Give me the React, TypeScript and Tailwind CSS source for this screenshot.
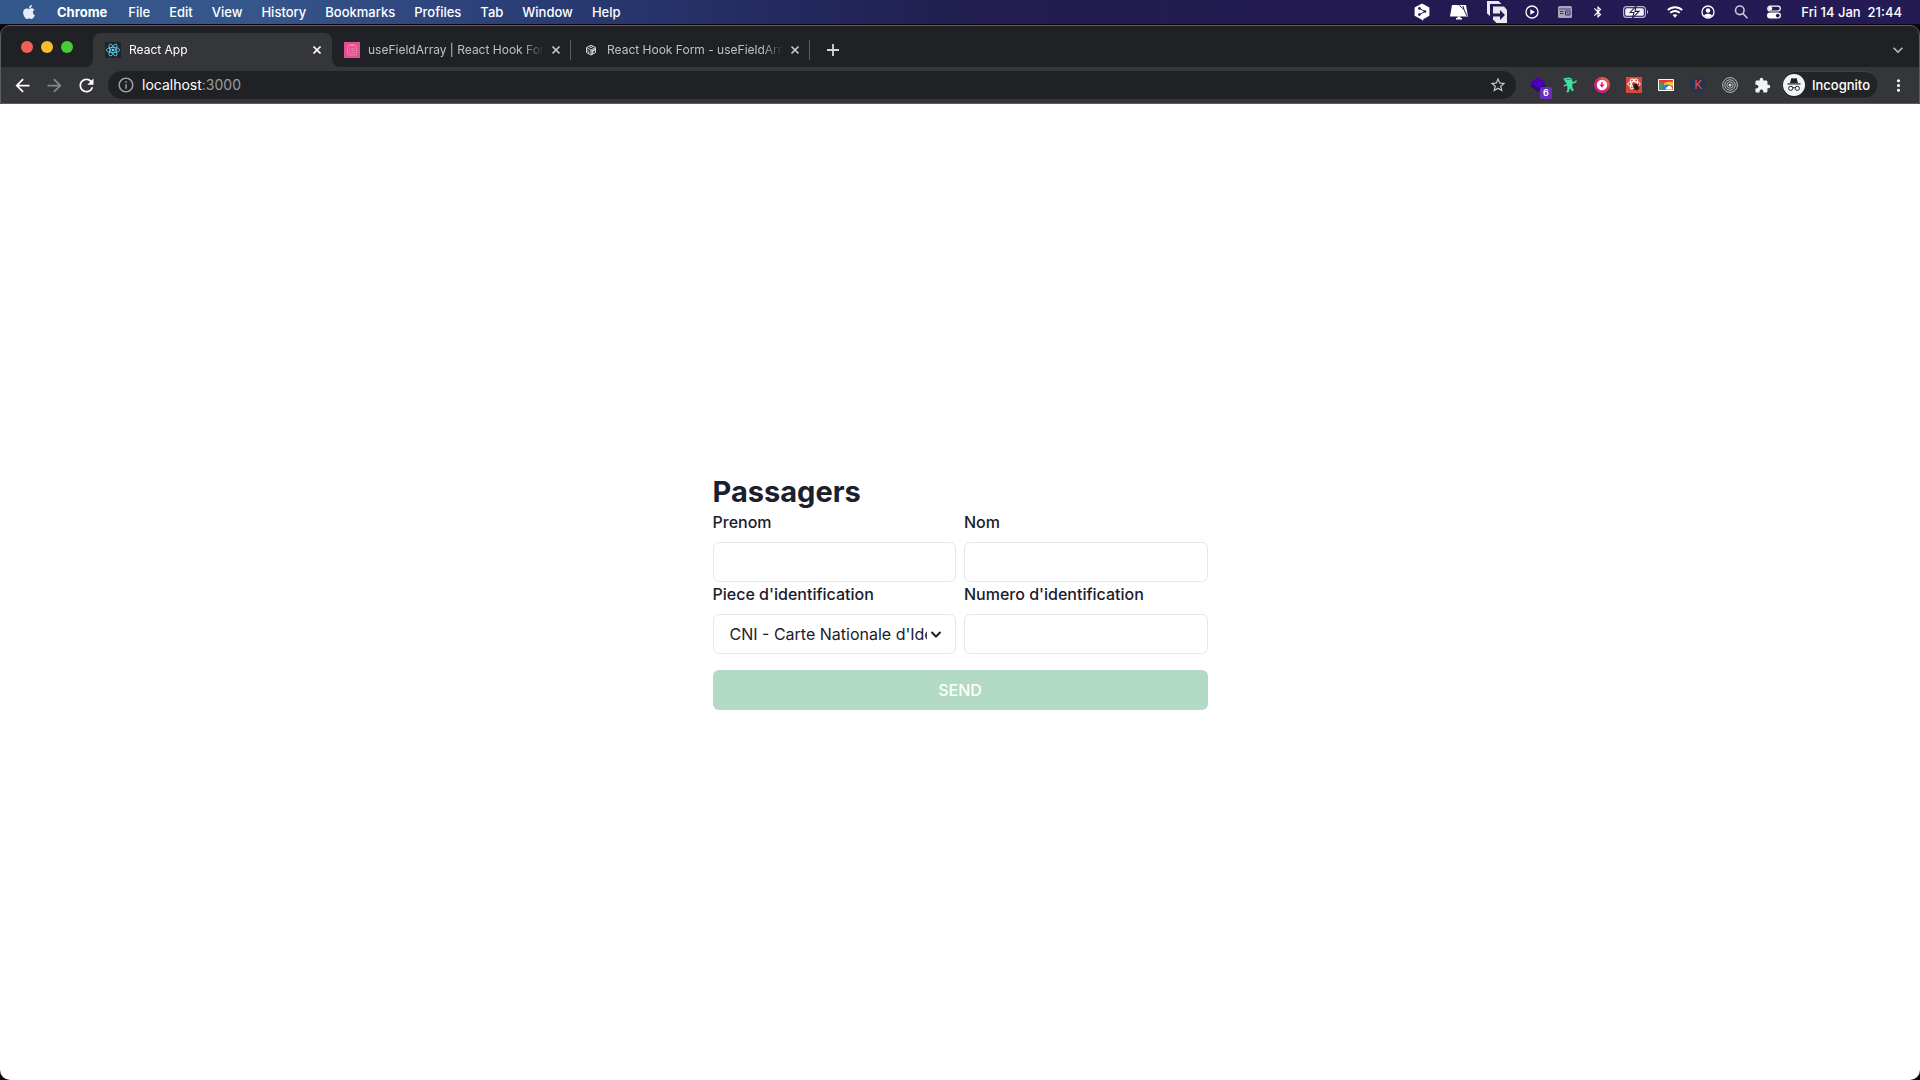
import React, { useState } from 'react';
import { FaApple } from 'react-icons/fa';
import {
  MdArrowBack,
  MdArrowForward,
  MdBluetooth,
  MdExtension,
  MdInfoOutline,
  MdMoreVert,
  MdRefresh,
  MdStarBorder,
} from 'react-icons/md';

const MENUS = ['File', 'Edit', 'View', 'History', 'Bookmarks', 'Profiles', 'Tab', 'Window', 'Help'];

/* ---------- status bar icons ---------- */

const HexIcon = () => (
  <svg className="w-[18px] h-[18px]" viewBox="0 0 18 18">
    <path d="M9 .5 16.400 4.500v8.200L11 15.800 9 18V16.800L1.600 12.700V4.500Z" fill="#fff" />
    <path d="M6.400 5.400 12 8.500 6.400 11.600" fill="none" stroke="#241b52" strokeWidth="1" />
    <circle cx="6.400" cy="5.400" r="1.300" fill="#241b52" />
    <circle cx="12" cy="8.500" r="1.300" fill="#241b52" />
    <circle cx="6.400" cy="11.600" r="1.300" fill="#241b52" />
  </svg>
);

const MonitorIcon = () => (
  <svg className="w-5 h-[18px]" viewBox="0 0 20 18">
    <path d="M3 2h14l2 11.500H1Z" fill="#fff" />
    <path d="M10.500 2.500 15 6.500l3 6.500M14 3l1 3.500" fill="none" stroke="#241b52" strokeWidth="1" />
    <path d="M8.500 13.500h3V15H13v1.600H7V15h1.500Z" fill="#fff" />
  </svg>
);

const ShareIcon = () => (
  <svg className="w-5 h-[22px]" viewBox="0 0 20 22">
    <path d="M0 0h11.500l3 3H3v12L0 12.500Z" fill="#e9e8ee" />
    <path d="M6 5.500h11L20 9v13H9.500L6 18.500Z" fill="#e9e8ee" />
    <path d="M6 12.500h7V9l5 5-5 5v-3.500H6Z" fill="#241b52" />
  </svg>
);

const PlayCircleIcon = () => (
  <svg className="w-3.5 h-3.5" viewBox="0 0 14 14">
    <circle cx="7" cy="7" r="6" fill="none" stroke="#fff" strokeWidth="1.300" />
    <path d="M5.300 4.200 10 7l-4.700 2.800Z" fill="#fff" />
  </svg>
);

const PanelIcon = () => (
  <svg className="w-4 h-3.5" viewBox="0 0 16 14">
    <rect x="1" y="1" width="14" height="12" rx="1.500" fill="#a9a5bf" />
    <path d="M2 4h12" stroke="#4b4475" />
    <path d="M3 6.500h3.500M3 8.500h3.500M8.500 6h4.500v4H8.500ZM9.500 7l2 2" fill="none" stroke="#352c66" />
  </svg>
);

const BatteryIcon = () => (
  <svg className="w-[26px] h-3" viewBox="0 0 26 12">
    <rect x=".6" y=".6" width="21.800" height="10.800" rx="3" fill="none" stroke="#bdb9cf" strokeWidth="1.100" />
    <rect x="2.200" y="2.200" width="18.600" height="7.600" rx="1.600" fill="#f1f0f5" />
    <path d="M13 .2 7.200 6.500h3.800L9.600 11.800 16 5.400h-4Z" fill="#fff" stroke="#241b52" strokeWidth="1.100" />
    <path d="M24 4c1.600.8 1.600 3.200 0 4Z" fill="#bdb9cf" />
  </svg>
);

const WifiIcon = () => (
  <svg className="w-4 h-3" viewBox="0 0 16 12" fill="none" stroke="#fff" strokeWidth="1.900">
    <path d="M.8 4.200c4-4 10.400-4 14.400 0" />
    <path d="M3.300 6.900c2.700-2.500 6.700-2.500 9.400 0" />
    <path d="M5.600 9.100c1.400-1.200 3.400-1.200 4.800 0L8 11.700Z" fill="#fff" stroke="none" />
  </svg>
);

const UserIcon = () => (
  <svg className="w-3.5 h-3.5" viewBox="0 0 14 14">
    <circle cx="7" cy="7" r="6" fill="none" stroke="#fff" strokeWidth="1.300" />
    <circle cx="7" cy="5.500" r="2.200" fill="#fff" />
    <path d="M2.900 10.600c1.800-2.600 6.400-2.600 8.200 0C9 13 5 13 2.900 10.600Z" fill="#fff" />
  </svg>
);

const SearchIcon = () => (
  <svg className="w-4 h-4" viewBox="0 0 16 16" fill="none" stroke="#c9c6d8" strokeWidth="1.600">
    <circle cx="6.800" cy="6.300" r="4.300" />
    <path d="m10 9.600 4 4.200" strokeLinecap="round" />
  </svg>
);

const ControlIcon = () => (
  <svg className="w-3.5 h-3.5" viewBox="0 0 14 14">
    <rect x=".7" y="1.200" width="12.600" height="4.800" rx="2.400" fill="none" stroke="#fff" strokeWidth="1.200" />
    <circle cx="3.200" cy="3.600" r="2" fill="#fff" />
    <rect x="0" y="7.600" width="14" height="6" rx="3" fill="#fff" />
    <circle cx="10.800" cy="10.600" r="1.900" fill="#241b52" />
  </svg>
);

/* ---------- tab icons ---------- */

const ReactLogo = () => (
  <svg className="w-4 h-4 shrink-0" viewBox="0 0 16 16">
    <rect width="16" height="16" rx="1" fill="#20232a" />
    <g fill="none" stroke="#61dafb" strokeWidth=".8">
      <ellipse cx="8" cy="8" rx="6.600" ry="2.600" />
      <ellipse cx="8" cy="8" rx="6.600" ry="2.600" transform="rotate(60 8 8)" />
      <ellipse cx="8" cy="8" rx="6.600" ry="2.600" transform="rotate(120 8 8)" />
    </g>
    <circle cx="8" cy="8" r="1.300" fill="#61dafb" />
  </svg>
);

const HookFormLogo = () => (
  <svg className="w-4 h-4 shrink-0" viewBox="0 0 16 16">
    <rect width="16" height="16" fill="#e3508f" />
    <g fill="none" stroke="#f28fb8" strokeWidth=".8">
      <rect x="3.500" y="3.500" width="9" height="9.500" rx="1.500" />
      <path d="M6.200 3.500V2.600h3.600v.9M5.200 6.300h1M7.200 6.300h3.600M5.200 8.500h1M7.200 8.500h3.600M5.200 10.700h1M7.200 10.700h3.600" />
    </g>
  </svg>
);

const SandboxLogo = () => (
  <svg className="w-4 h-4 shrink-0" viewBox="0 0 16 16" fill="none" stroke="#d0d1d3" strokeWidth="1">
    <path d="M8 3.200 12.500 5.600v5L8 13l-4.500-2.400v-5Z" />
    <path d="M3.500 5.600 8 8l4.500-2.400M8 8v5M5.700 4.400 8 5.600l2.300-1.200M3.500 8.200l2.300 1.100v2.400" />
    <path d="m8.500 8.500 4-2.200v1.900l-2.200 1.100v2.300L8.500 12.500Z" fill="#d0d1d3" stroke="none" />
  </svg>
);

/* ---------- extension icons ---------- */

const LayersIcon = () => (
  <svg className="w-4 h-4" viewBox="0 0 16 16">
    <path d="M0 8.500 8 3.500l8 5L8 15Z" fill="#2c0a7a" />
    <path d="M0 5.800 8 0l8 5.800-8 5.800Z" fill="#4b00b5" />
  </svg>
);

const GremlinIcon = () => (
  <svg className="w-4 h-4" viewBox="0 0 16 16" fill="#41e0a0">
    <path d="M1 1.400 4 .9C5.500 0 9 .2 10 2l.5 2.800 2.700-.4.6-1.300.6.4.4-.4-.2 1.700-1.200 1.200-2.600.4-.6 1.200.4 3.600 1.200 1.400-.8 1.400H9.500l-.6-2.200-1.300.2-.4 2-.8 1.200H4.500l-.2-1 1-.8.1-3.800-.7-1.200L2.600 9.600l-1-.4.3-1.200L3.600 7.800l1.300-1.600L3.200 5 2 2.400Z" />
    <path d="M4.500 2.500h4.300" stroke="#1c7a5b" strokeWidth=".8" />
  </svg>
);

const DownloadIcon = () => (
  <svg className="w-4 h-4" viewBox="0 0 16 16">
    <defs>
      <linearGradient id="ring" x1="0" y1="1" x2="1" y2="0">
        <stop offset="0" stopColor="#b01fa0" />
        <stop offset=".5" stopColor="#e0206a" />
        <stop offset="1" stopColor="#f08a24" />
      </linearGradient>
    </defs>
    <circle cx="8" cy="8" r="8" fill="url(#ring)" />
    <circle cx="8" cy="8" r="5.200" fill="#fff" />
    <path d="M7.300 5h1.400v2.600h2L8 10.800 5.300 7.600h2Z" fill="#e0206a" />
  </svg>
);

const BugIcon = () => (
  <svg className="w-4 h-4" viewBox="0 0 16 16">
    <rect width="16" height="16" fill="#d9483b" />
    <g fill="none" stroke="#fff" strokeWidth="1">
      <ellipse cx="8" cy="7" rx="6.200" ry="2.500" />
      <ellipse cx="8" cy="7" rx="5.600" ry="2.500" transform="rotate(60 8 7)" />
      <ellipse cx="8" cy="7" rx="5.600" ry="2.500" transform="rotate(120 8 7)" />
    </g>
    <ellipse cx="10" cy="10" rx="2.400" ry="3.300" fill="#2b1512" transform="rotate(-35 10 10)" />
    <path d="m7 9.500 6-2M7 12.500l6.500-1.500M10 6l1 8" stroke="#2b1512" strokeWidth=".8" />
  </svg>
);

const RainbowIcon = () => (
  <svg className="w-4 h-4" viewBox="0 0 16 16">
    <rect x="0" y="2" width="16" height="12" rx="1" fill="#fff" />
    <rect x="1" y="3" width="14" height="10" fill="#e53935" />
    <path d="M15 4.500v5L9 7.500Z" fill="#fbc02d" />
    <path d="M1 13V5l5 1.500L4 13Z" fill="#43a047" />
    <path d="M6 6.500c2-2 5-2.200 9-1.500v3H6Z" fill="#fbc02d" />
    <path d="M3.500 13c0-3.500 2.500-5.500 5.500-5.500 2.500 0 3.500 1 4.500 2.500V13Z" fill="#2f7de1" />
    <path d="M8 12.500a1.800 1.800 0 0 1 1.500-2.600 2 2 0 0 1 3.600 0 1.600 1.600 0 0 1 .9 2.600Z" fill="#fff" />
  </svg>
);

const TargetIcon = () => (
  <svg className="w-4 h-4" viewBox="0 0 16 16" fill="none" stroke="#b9babd" strokeWidth="1">
    <circle cx="8" cy="8" r="7.400" />
    <circle cx="8" cy="8" r="5.200" />
    <circle cx="8" cy="8" r="3.200" />
    <circle cx="8" cy="8" r="1.500" fill="#d8d9db" stroke="none" />
  </svg>
);

const IncognitoIcon = () => (
  <svg className="w-[22px] h-[22px]" viewBox="0 0 22 22">
    <circle cx="11" cy="11" r="11" fill="#f1f3f4" />
    <path d="M7 9 8.200 4.700c.2-.6.7-.7 1.200-.5l1.600.4 1.600-.4c.5-.2 1-.1 1.200.5L15 9Z" fill="#202124" />
    <rect x="4.500" y="9.300" width="13" height="1.200" fill="#202124" />
    <g fill="none" stroke="#202124" strokeWidth="1">
      <circle cx="7.700" cy="14.300" r="2.100" />
      <circle cx="14.300" cy="14.300" r="2.100" />
      <path d="M9.800 14c.8-.5 1.600-.5 2.400 0" />
    </g>
  </svg>
);

interface TabProps {
  title: string;
  icon: React.ReactNode;
  active?: boolean;
}

const Tab: React.FC<TabProps> = ({ title, icon, active }) => (
  <div
    className={`relative flex items-center w-[239px] h-[34px] pl-3 pr-1.5 ${
      active ? 'bg-[#35363a] rounded-t-lg text-white' : 'text-[#bdc1c6]'
    }`}
  >
    {active && (
      <>
        <svg className="absolute right-full bottom-0 w-2 h-2" viewBox="0 0 8 8">
          <path d="M8 0v8H0a8 8 0 0 0 8-8Z" fill="#35363a" />
        </svg>
        <svg className="absolute left-full bottom-0 w-2 h-2" viewBox="0 0 8 8">
          <path d="M0 0v8h8a8 8 0 0 1-8-8Z" fill="#35363a" />
        </svg>
      </>
    )}
    {icon}
    <span className="flex-1 min-w-0 ml-2 mr-1 overflow-hidden whitespace-nowrap text-[12px] leading-4 [mask-image:linear-gradient(to_right,black_88%,transparent)]">
      {title}
    </span>
    <button className="w-4 h-4 flex items-center justify-center" aria-label={`Close ${title}`}>
      <svg className="w-2 h-2" viewBox="0 0 8 8" stroke="currentColor" strokeWidth="1.600">
        <path d="m.5.5 7 7m0-7-7 7" />
      </svg>
    </button>
    <span className={`w-px h-5 shrink-0 ml-1.5 -mr-1.5 ${active ? '' : 'bg-[#5b5c60]'}`} />
  </div>
);

const MenuBar = () => (
  <header className="flex items-center justify-between h-6 pr-[18px] pl-[22px] text-[13px] leading-4 font-medium text-white bg-[linear-gradient(to_right,#33588a_0%,#35558b_14%,#2a3c74_28%,#232b61_40%,#211e50_50%,#241a52_75%,#241b55_100%)]">
    <div className="flex items-center gap-[21px]">
      <FaApple className="w-3.5 h-4 text-[#e8ecf3]" />
      <button className="font-bold">Chrome</button>
      <nav className="flex items-center gap-[19px]">
        {MENUS.map((menu) => (
          <button key={menu}>{menu}</button>
        ))}
      </nav>
    </div>
    <div className="flex items-center gap-[18px]">
      <HexIcon />
      <MonitorIcon />
      <ShareIcon />
      <PlayCircleIcon />
      <PanelIcon />
      <MdBluetooth className="w-3.5 h-4" />
      <BatteryIcon />
      <WifiIcon />
      <UserIcon />
      <SearchIcon />
      <ControlIcon />
      <time className="w-[103px] text-right whitespace-pre">Fri 14 Jan  21:44</time>
    </div>
  </header>
);

const BrowserChrome = () => (
  <div className="border border-[#5c5d60] rounded-t-[10px] bg-[#202124] overflow-hidden">
    <div className="flex items-end h-[41px]">
      <div className="flex gap-2 w-[92px] pl-5 self-center">
        <span className="w-3 h-3 rounded-full bg-[#f65f57]" />
        <span className="w-3 h-3 rounded-full bg-[#f8bd2f]" />
        <span className="w-3 h-3 rounded-full bg-[#46cc37]" />
      </div>
      <Tab title="React App" icon={<ReactLogo />} active />
      <Tab title="useFieldArray | React Hook Form" icon={<HookFormLogo />} />
      <Tab title="React Hook Form - useFieldArray" icon={<SandboxLogo />} />
      <button className="w-6 h-[34px] ml-[11px] flex items-center justify-center text-[#d5d7da]" aria-label="New tab">
        <svg className="w-3 h-3" viewBox="0 0 12 12" stroke="currentColor" strokeWidth="1.800">
          <path d="M6 0v12M0 6h12" />
        </svg>
      </button>
      <button className="w-6 h-[34px] ml-auto mr-[9px] flex items-center justify-center text-[#bdc1c6]" aria-label="Search tabs">
        <svg className="w-2.5 h-2.5" viewBox="0 0 10 10" fill="none" stroke="currentColor" strokeWidth="1.600">
          <path d="m.6 2.800 4.400 4.400 4.400-4.400" />
        </svg>
      </button>
    </div>

    <div className="flex items-center h-9 pl-[9px] pr-[11px] bg-[#35363a]">
      <div className="flex gap-2 text-white">
        <button className="w-6 h-6 flex items-center justify-center" aria-label="Back">
          <MdArrowBack size={21} />
        </button>
        <button className="w-6 h-6 flex items-center justify-center text-[#85868a]" aria-label="Forward">
          <MdArrowForward size={21} />
        </button>
        <button className="w-6 h-6 flex items-center justify-center" aria-label="Reload">
          <MdRefresh size={21} />
        </button>
      </div>
      <div className="flex items-center flex-1 h-7 ml-2.5 mr-3.5 pl-[9px] pr-[9px] rounded-full bg-[#202124]">
        <MdInfoOutline size={18} className="text-[#9aa0a6]" />
        <div className="flex-1 ml-[7px] text-[14px] leading-5 text-[#9a9ca0]">
          <span className="text-white">localhost</span>:3000
        </div>
        <button aria-label="Bookmark this page">
          <MdStarBorder size={18} className="text-[#c8cacd]" />
        </button>
      </div>
      <div className="flex items-center gap-4 h-7">
        <div className="relative w-4 h-4">
          <LayersIcon />
          <span className="absolute left-2.5 top-2.5 w-3 h-3 rounded-xs bg-[#6b2fc0] text-white text-[9px] leading-3 font-semibold text-center">
            6
          </span>
        </div>
        <GremlinIcon />
        <DownloadIcon />
        <BugIcon />
        <RainbowIcon />
        <span className="w-4 h-4 rounded-full bg-[#24364f] text-[#e0504c] font-['Roboto',sans-serif] text-[12px] leading-4 text-center">
          K
        </span>
        <TargetIcon />
        <MdExtension size={17} className="text-[#f1f3f4]" />
      </div>
      <button className="flex items-center w-[98px] h-7 ml-[10px] pl-px rounded-full border border-[#404145] bg-[#232428] text-white text-[13px] leading-4 font-medium">
        <IncognitoIcon />
        <span className="ml-[7px]">Incognito</span>
      </button>
      <button className="w-5 h-6 ml-[9px] flex items-center justify-center text-white" aria-label="Menu">
        <MdMoreVert size={19} className="shrink-0" />
      </button>
    </div>
  </div>
);

const fieldClass = 'w-full h-10 pl-4 border border-[#e2e8f0] rounded-md bg-white text-[#1a202c] text-[16px]';

interface FieldProps {
  id: string;
  label: string;
  children: React.ReactNode;
}

const Field: React.FC<FieldProps> = ({ id, label, children }) => (
  <div className="min-w-0">
    <label htmlFor={id} className="block mb-2 text-[16px] leading-6 font-medium">
      {label}
    </label>
    {children}
  </div>
);

const PassengerForm = () => {
  const [passenger, setPassenger] = useState({ prenom: '', nom: '', piece: 'cni', numero: '' });

  const handleChange = (e: React.ChangeEvent<HTMLInputElement | HTMLSelectElement>) => {
    setPassenger({ ...passenger, [e.target.name]: e.target.value });
  };

  return (
    <form className="w-[495px] max-w-full text-[#1a202c]" onSubmit={(e) => e.preventDefault()}>
      <h2 className="text-[29px] leading-9 font-bold">Passagers</h2>
      <div className="grid grid-cols-2 gap-x-2">
        <Field id="prenom" label="Prenom">
          <input id="prenom" name="prenom" value={passenger.prenom} onChange={handleChange} className={`${fieldClass} pr-4`} />
        </Field>
        <Field id="nom" label="Nom">
          <input id="nom" name="nom" value={passenger.nom} onChange={handleChange} className={`${fieldClass} pr-4`} />
        </Field>
        <Field id="piece" label="Piece d'identification">
          <div className="relative">
            <select
              id="piece"
              name="piece"
              value={passenger.piece}
              onChange={handleChange}
              className={`${fieldClass} appearance-none pr-7`}
            >
              <option value="cni">CNI - Carte Nationale d'Identite</option>
              <option value="passeport">Passeport</option>
            </select>
            <svg
              className="absolute right-2 top-2.5 w-6 h-5 pointer-events-none"
              viewBox="0 0 24 20"
              fill="none"
              stroke="currentColor"
              strokeWidth="2"
            >
              <path d="m7.500 8 4.500 4.500L16.500 8" />
            </svg>
          </div>
        </Field>
        <Field id="numero" label="Numero d'identification">
          <input id="numero" name="numero" value={passenger.numero} onChange={handleChange} className={`${fieldClass} pr-4`} />
        </Field>
      </div>
      <button type="submit" className="w-full h-10 mt-4 rounded-md bg-[#b2dac4] text-white text-[16px] leading-5 font-medium">
        SEND
      </button>
    </form>
  );
};

const App = () => (
  <div className="flex flex-col min-h-screen bg-[#12060e] font-['Inter',sans-serif]">
    <MenuBar />
    <div className="flex flex-col flex-1 mt-px">
      <BrowserChrome />
      <main className="flex flex-1 items-center justify-center bg-white rounded-b-[10px]">
        <PassengerForm />
      </main>
    </div>
  </div>
);

export default App;
